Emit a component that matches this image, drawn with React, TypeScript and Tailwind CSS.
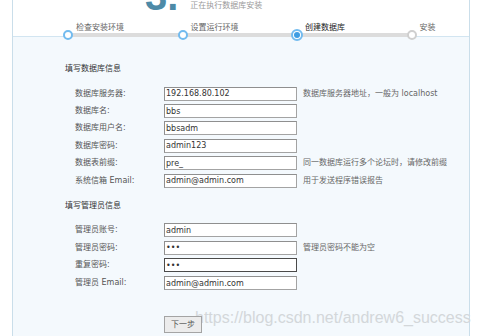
import React from "react";

const FONT = '"DejaVu Sans", "Noto Sans CJK SC", sans-serif';

type Row = { label: string; value: string; type?: string; hint?: string; dark?: boolean };

const dbRows: Row[] = [
  { label: "数据库服务器:", value: "192.168.80.102", hint: "数据库服务器地址，一般为 localhost" },
  { label: "数据库名:", value: "bbs" },
  { label: "数据库用户名:", value: "bbsadm" },
  { label: "数据库密码:", value: "admin123" },
  { label: "数据表前缀:", value: "pre_", hint: "同一数据库运行多个论坛时，请修改前缀" },
  { label: "系统信箱 Email:", value: "admin@admin.com", hint: "用于发送程序错误报告" },
];

const adminRows: Row[] = [
  { label: "管理员账号:", value: "admin" },
  { label: "管理员密码:", value: "abc", type: "password", hint: "管理员密码不能为空" },
  { label: "重复密码:", value: "abc", type: "password", dark: true },
  { label: "管理员 Email:", value: "admin@admin.com" },
];

const steps = ["检查安装环境", "设置运行环境", "创建数据库", "安装"];

function FormRow({ row }: { row: Row }) {
  return (
    <div className="flex items-center h-[14px]">
      <div className="w-[99px] shrink-0 pl-[10px] text-[8px] leading-[12px] text-[#555] whitespace-nowrap">{row.label}</div>
      <input
        type={row.type || "text"}
        defaultValue={row.value}
        readOnly
        className={
          "w-[133px] shrink-0 h-[14px] bg-white pl-[1px] text-[8px] text-[#333] outline-none border " +
          (row.dark ? "border-[#4a4a4a]" : "border-[#a3a3a3] border-t-[#8f8f8f] border-l-[#8f8f8f]")
        }
        style={{ fontFamily: FONT }}
      />
      {row.hint && (
        <div className="ml-[6px] text-[8px] leading-[12px] text-[#666] whitespace-nowrap">{row.hint}</div>
      )}
    </div>
  );
}

export default function App() {
  return (
    <div className="w-[481px] h-[336px] bg-white overflow-hidden flex relative" style={{ fontFamily: FONT }}>
      <div className="ml-[12px] w-[458px] h-full border-x border-[#cadeea] flex flex-col">
        {/* top */}
        <div className="bg-white border-b border-[#d2e5f1] flex flex-col">
          <div className="h-[13px] overflow-hidden flex items-start pl-[132px]">
            <span
              className="text-[40px] leading-[40px] mt-[-24px] text-[#4d8aa7] font-bold"
              style={{ fontFamily: '"Liberation Sans", Arial, sans-serif' }}
            >
              3.
            </span>
            <span className="ml-[12px] text-[8px] leading-[12px] text-[#9a9a9a]">正在执行数据库安装</span>
          </div>
          <div className="flex ml-[49px] mt-[9px] h-[11px]">
            {steps.map((s, i) => (
              <div
                key={s}
                className={
                  "w-[114.5px] shrink-0 pl-[14px] text-[8px] leading-[11px] whitespace-nowrap " +
                  (i === 2 ? "text-[#222]" : "text-[#666]")
                }
              >
                {s}
              </div>
            ))}
          </div>
          <div className="flex ml-[49px] h-[3px] items-center relative z-10">
            {steps.map((s, i) => (
              <div key={s} className={"flex items-center shrink-0 " + (i < 3 ? "w-[114.5px]" : "w-[12px]")}>
                <div className="w-[12px] h-[12px] flex items-center justify-center relative z-10">
                  {i < 2 && <div className="w-[10px] h-[10px] rounded-full border-2 border-[#72bbef] bg-white" />}
                  {i === 2 && (
                    <div className="w-[12px] h-[12px] rounded-full border-2 border-[#72bbef] bg-white flex items-center justify-center">
                      <div className="w-[6px] h-[6px] rounded-full bg-[#3f9de2]" />
                    </div>
                  )}
                  {i === 3 && <div className="w-[10px] h-[10px] rounded-full border-2 border-[#cfcfcf] bg-white" />}
                </div>
                {i < 3 && <div className="flex-1 h-[4px] bg-[#dcdcdc] -mx-[2px]" />}
              </div>
            ))}
          </div>
        </div>
        {/* form */}
        <div className="flex-1 bg-[#f4f9fd] flex flex-col pl-[52px] pt-[26px] relative">
          <div className="text-[8px] leading-[12px] text-[#333]">填写数据库信息</div>
          <div className="flex flex-col gap-[3.4px] mt-[11.7px]">
            {dbRows.map((r) => (
              <FormRow key={r.label} row={r} />
            ))}
          </div>
          <div className="text-[8px] leading-[12px] text-[#333] mt-[12px]">填写管理员信息</div>
          <div className="flex flex-col gap-[3.6px] mt-[11.6px]">
            {adminRows.map((r) => (
              <FormRow key={r.label} row={r} />
            ))}
          </div>
          <div className="mt-[20px] pl-[99px] relative z-10">
            <button className="w-[38px] h-[17px] border border-[#a4a4a4] bg-[#ececec] text-[8px] text-[#555] leading-[15px]">
              下一步
            </button>
          </div>
          <div
            className="absolute left-[182px] top-[271px] text-[16px] leading-[20px] text-[#d3d7da] whitespace-nowrap"
            style={{ fontFamily: '"Liberation Sans", Arial, sans-serif' }}
          >
            https://blog.csdn.net/andrew6_success
          </div>
        </div>
      </div>
    </div>
  );
}
